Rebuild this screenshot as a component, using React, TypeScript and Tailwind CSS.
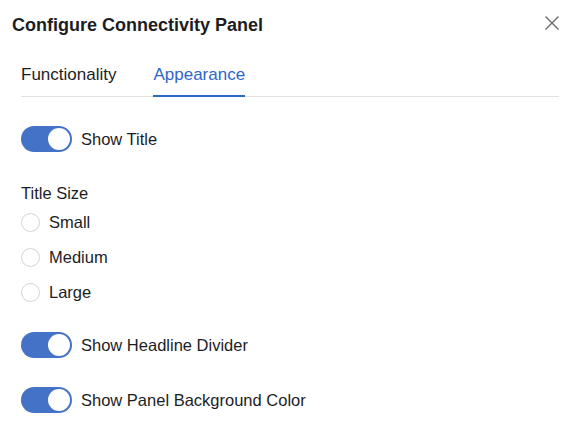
import React, { useState } from 'react';

function Toggle({ on, onChange }: { on: boolean; onChange: () => void }) {
  return (
    <button
      type="button"
      onClick={onChange}
      className={`relative h-[26px] w-[51px] shrink-0 rounded-full ${on ? 'bg-[#4472c6]' : 'bg-gray-300'}`}
    >
      <span
        className={`absolute top-[2px] h-[22px] w-[22px] rounded-full bg-white ${on ? 'left-[27px]' : 'left-[2px]'}`}
      />
    </button>
  );
}

function ToggleRow({ label, on, onChange }: { label: string; on: boolean; onChange: () => void }) {
  return (
    <div className="flex items-center gap-[9px]">
      <Toggle on={on} onChange={onChange} />
      <span className="text-[16.5px] text-[#1d1d1f]">{label}</span>
    </div>
  );
}

export default function App() {
  const [showTitle, setShowTitle] = useState(true);
  const [divider, setDivider] = useState(true);
  const [bg, setBg] = useState(true);
  const [size, setSize] = useState<string | null>(null);

  return (
    <div className="h-[424px] w-[576px] bg-white font-['Liberation_Sans',Arial,sans-serif] text-[#1d1d1f]">
      <div className="flex items-start justify-between pl-[12px] pr-[16px] pt-[12px]">
        <h1 className="text-[18px] font-bold leading-[26px]">Configure Connectivity Panel</h1>
        <button type="button" className="mt-[3px] text-[#6b6b6b]" aria-label="Close">
          <svg width="16" height="16" viewBox="0 0 16 16" fill="none" stroke="currentColor" strokeWidth="1.4">
            <path d="M1.5 1.5L14.5 14.5M14.5 1.5L1.5 14.5" />
          </svg>
        </button>
      </div>

      <div className="ml-[21px] mr-[17px] mt-[27px] flex gap-[37px] border-b border-[#e2e2e2]">
        <button type="button" className="pb-[11px] text-[17px] leading-[20px] text-[#1d1d1f]">
          Functionality
        </button>
        <button
          type="button"
          className="-mb-px border-b-2 border-[#2f66c9] px-0 pb-[10px] text-[17px] leading-[20px] text-[#2f66c9]"
        >
          Appearance
        </button>
      </div>

      <div className="mx-[21px] mt-[29px]">
        <ToggleRow label="Show Title" on={showTitle} onChange={() => setShowTitle(!showTitle)} />

        <div className="mt-[31px] text-[16.5px] leading-[20px]">Title Size</div>
        <div className="mt-[9px] flex flex-col gap-[15px]">
          {['Small', 'Medium', 'Large'].map((s) => (
            <label key={s} className="flex cursor-pointer items-center gap-[9px]" onClick={() => setSize(s)}>
              <span
                className={`h-[19px] w-[19px] rounded-full border ${size === s ? 'border-[5px] border-[#4472c6]' : 'border-[#d4d4d4]'}`}
              />
              <span className="text-[16.5px] leading-[20px]">{s}</span>
            </label>
          ))}
        </div>

        <div className="mt-[30px] flex flex-col gap-[29px]">
          <ToggleRow label="Show Headline Divider" on={divider} onChange={() => setDivider(!divider)} />
          <ToggleRow label="Show Panel Background Color" on={bg} onChange={() => setBg(!bg)} />
        </div>
      </div>
    </div>
  );
}
